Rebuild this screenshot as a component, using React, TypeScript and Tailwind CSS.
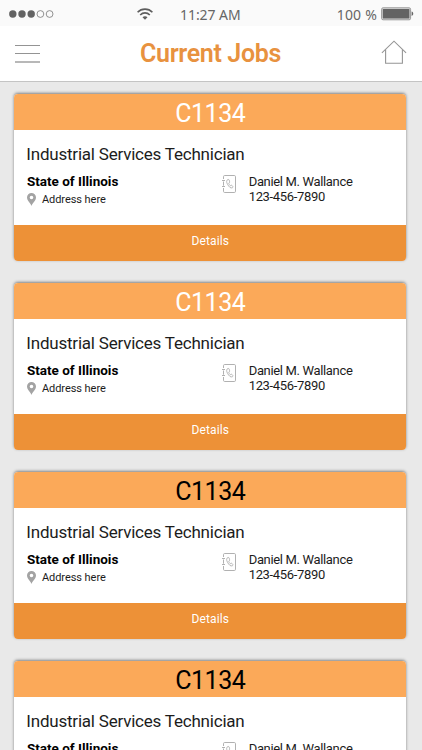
import React from 'react';

interface Job {
  code: string;
  codeColor: string;
}

const jobs: Job[] = [
  { code: 'C1134', codeColor: 'text-white' },
  { code: 'C1134', codeColor: 'text-white' },
  { code: 'C1134', codeColor: 'text-black' },
  { code: 'C1134', codeColor: 'text-black' },
];

function StatusBar() {
  return (
    <div className="flex h-[26px] items-center bg-[#fafafa] pl-[9px] pr-[8px] font-['Noto_Sans',sans-serif] text-[14px] text-[#666]">
      <svg width="46" height="10" viewBox="0 0 46 10" className="mt-[2px]">
        <circle cx="3.8" cy="5" r="3.7" fill="#636363" />
        <circle cx="13" cy="5" r="3.7" fill="#636363" />
        <circle cx="22.2" cy="5" r="3.7" fill="#636363" />
        <circle cx="31.4" cy="5" r="3.4" fill="none" stroke="#777" strokeWidth="0.8" />
        <circle cx="40.6" cy="5" r="3.4" fill="none" stroke="#777" strokeWidth="0.8" />
      </svg>
      <svg width="16" height="12" viewBox="0 0 16 12" className="ml-[82px] mt-[1px]" fill="none" stroke="#5e5e5e" strokeWidth="1.6">
        <path d="M0.6 4.3C4.6 0.1 11.4 0.1 15.4 4.3" />
        <path d="M3.2 7C5.9 4.2 10.1 4.2 12.8 7" />
        <path d="M5.5 9.2C7 7.8 9 7.8 10.5 9.2L8 11.8Z" fill="#5e5e5e" stroke="none" />
      </svg>
      <span className="ml-[27px] mt-[2px] w-[120px] whitespace-nowrap tracking-[-0.05px]">11:27 AM</span>
      <span className="ml-auto mt-[2px] whitespace-nowrap tracking-[0.2px]">100 %</span>
      <svg width="33" height="14" viewBox="0 0 33 14" className="ml-[4px] mt-[1px]">
        <rect x="0.6" y="0.8" width="29" height="12" rx="1.5" fill="#d8d8d8" stroke="#999" strokeWidth="1" />
        <rect x="1.8" y="2" width="26.6" height="9.6" rx="0.6" fill="#636363" />
        <path d="M30.6 4.6C32.8 5 32.8 8.6 30.6 9Z" fill="#666" />
      </svg>
    </div>
  );
}

function TopNav() {
  return (
    <div className="flex h-[56px] items-center justify-between border-b border-[#c4c4c4] bg-white pl-[15px] pr-[15px]">
      <button aria-label="Menu" className="flex w-[25px] flex-col gap-[7px]">
        <span className="h-[1px] bg-[#949494]" />
        <span className="h-[1px] bg-[#949494]" />
        <span className="h-[2px] bg-[#b8b8b8]" />
      </button>
      <h1 className="text-[25px] font-semibold leading-[30px] tracking-[-0.35px] text-[#e8923f]">Current Jobs</h1>
      <svg width="26" height="24" viewBox="0 0 26 24" fill="none" stroke="#959595" strokeWidth="1.1" className="mb-[4px]">
        <path d="M0.9 12.8L13 1.2L25.1 12.8" />
        <path d="M4.6 9.4V23.3H21.4V9.4" />
      </svg>
    </div>
  );
}

function PinIcon() {
  return (
    <svg width="9" height="13" viewBox="0 0 9 13" fill="#a3a3a3">
      <path
        fillRule="evenodd"
        d="M4.5 0A4.5 4.5 0 0 0 0 4.5C0 7.6 3.4 9.7 4.5 12.9C5.6 9.7 9 7.6 9 4.5A4.5 4.5 0 0 0 4.5 0ZM4.5 2.7A1.8 1.8 0 1 1 4.5 6.3A1.8 1.8 0 0 1 4.5 2.7Z"
      />
    </svg>
  );
}

function ContactBookIcon() {
  return (
    <svg width="14" height="18" viewBox="0 0 14 18" fill="none" stroke="#a8a8a8" strokeWidth="0.9" className="mt-[1px] shrink-0">
      <path d="M1.5 4V1.7Q1.5 0.5 2.7 0.5H12.3Q13.5 0.5 13.5 1.7V16.3Q13.5 17.5 12.3 17.5H2.7Q1.5 17.5 1.5 16.3V13M1.5 6.5V10.7" />
      <path d="M0 5.5H3M0 11.5H3" />
      <path
        strokeWidth="0.8"
        d="M6 4.4C4.4 5 4.2 7.1 5.5 9.3C6.9 11.7 8.6 13.6 10.3 12.8Q11.4 12.2 10.8 11.4L9.9 10.4Q9.2 9.9 8.7 10.6Q8.3 11.1 7.3 9.6Q6.4 8 7 7.8Q7.9 7.5 7.6 6.7L7.2 5.1Q6.8 4.2 6 4.4Z"
      />
    </svg>
  );
}

function JobCard({ job }: { job: Job }) {
  return (
    <article className="flex h-[167px] shrink-0 flex-col overflow-hidden rounded-[4px] bg-white shadow-[0_-1px_3px_rgba(0,0,0,0.45)]">
      <div className="flex h-[36px] items-center justify-center bg-[#fba959] pt-[4px]">
        <span className={`text-[25px] leading-[30px] tracking-[-0.45px] ${job.codeColor}`}>{job.code}</span>
      </div>
      <div className="flex h-[95px] flex-col pl-[12px] pt-[14px] text-[#1c1c1c]">
        <h2 className="text-[17px] leading-[20px] tracking-[-0.21px]">Industrial Services Technician</h2>
        <div className="mt-[10px] flex">
          <div className="w-[196px] pl-[0.6px]">
            <p className="text-[13.5px] font-bold leading-[15px] text-black">State of Illinois</p>
            <div className="mt-[3px] flex items-center gap-[6px]">
              <PinIcon />
              <span className="pt-[1px] text-[11px] leading-[14px] tracking-[-0.05px]">Address here</span>
            </div>
          </div>
          <ContactBookIcon />
          <div className="ml-[12.4px] whitespace-nowrap text-[13px] leading-[15px] tracking-[-0.34px]">
            <p>Daniel M. Wallance</p>
            <p>123-456-7890</p>
          </div>
        </div>
      </div>
      <button className="flex flex-1 items-center justify-center bg-[#ed9137] pb-[4px] text-[12px] tracking-[0.1px] text-white">Details</button>
    </article>
  );
}

export default function App() {
  return (
    <div className="flex h-[750px] w-[422px] flex-col overflow-hidden bg-[#e9e9e9] font-['Roboto',sans-serif]">
      <StatusBar />
      <TopNav />
      <main className="flex min-h-0 flex-1 flex-col gap-[22px] overflow-hidden pl-[14.3px] pr-[15.7px] pt-[12px]">
        {jobs.map((job, i) => (
          <JobCard key={i} job={job} />
        ))}
      </main>
    </div>
  );
}
